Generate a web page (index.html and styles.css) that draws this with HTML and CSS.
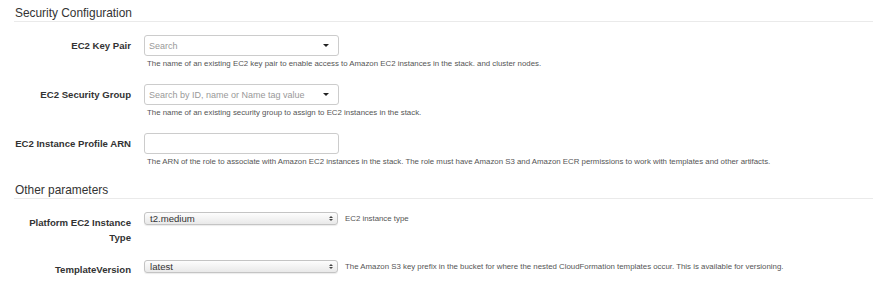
FILE: index.html
```
<!DOCTYPE html>
<html lang="en">
<head>
    <meta charset="UTF-8">
    <title>Stack parameters</title>
    <link rel="stylesheet" href="styles.css">
</head>
<body>
    <div class="section">
        <h3 class="section-title">Security Configuration</h3>

        <div class="row">
            <label class="row-label">EC2 Key Pair</label>
            <div class="field">
                <div class="picker">
                    <span class="placeholder">Search</span>
                    <span class="caret"></span>
                </div>
                <p class="help">The name of an existing EC2 key pair to enable access to Amazon EC2 instances in the stack. and cluster nodes.</p>
            </div>
        </div>

        <div class="row">
            <label class="row-label">EC2 Security Group</label>
            <div class="field">
                <div class="picker">
                    <span class="placeholder">Search by ID, name or Name tag value</span>
                    <span class="caret"></span>
                </div>
                <p class="help">The name of an existing security group to assign to EC2 instances in the stack.</p>
            </div>
        </div>

        <div class="row">
            <label class="row-label">EC2 Instance Profile ARN</label>
            <div class="field">
                <div class="text-input"></div>
                <p class="help">The ARN of the role to associate with Amazon EC2 instances in the stack. The role must have Amazon S3 and Amazon ECR permissions to work with templates and other artifacts.</p>
            </div>
        </div>
    </div>

    <div class="section">
        <h3 class="section-title">Other parameters</h3>

        <div class="row">
            <label class="row-label">Platform EC2 Instance Type</label>
            <div class="field inline">
                <div class="mac-select">
                    <span>t2.medium</span>
                    <span class="arrows"><i class="up"></i><i class="down"></i></span>
                </div>
                <p class="help">EC2 instance type</p>
            </div>
        </div>

        <div class="row">
            <label class="row-label">TemplateVersion</label>
            <div class="field inline">
                <div class="mac-select">
                    <span>latest</span>
                    <span class="arrows"><i class="up"></i><i class="down"></i></span>
                </div>
                <p class="help">The Amazon S3 key prefix in the bucket for where the nested CloudFormation templates occur. This is available for versioning.</p>
            </div>
        </div>
    </div>
</body>
</html>
```

FILE: styles.css
```
* {
    margin: 0;
    padding: 0;
    box-sizing: border-box;
}

body {
    font-family: "Liberation Sans", Arial, sans-serif;
    color: #333;
    background: #fff;
    padding: 5px 12px 0 14px;
}

/* Section headings */
.section-title {
    font-size: 11.9px;
    font-weight: normal;
    line-height: 16px;
    padding-left: 1px;
    border-bottom: 1px solid #eaeaea;
    margin-bottom: 13px;
    color: #333;
}

.section + .section {
    margin-top: 15px;
}

/* Parameter rows */
.row {
    display: grid;
    grid-template-columns: 117px 1fr;
    column-gap: 13px;
    margin-bottom: 15px;
}

.section:last-child .row:last-child {
    margin-bottom: 0;
}

.row-label {
    font-size: 9.6px;
    font-weight: bold;
    line-height: 15px;
    text-align: right;
    padding-top: 2.5px;
    margin-left: -8px;
    color: #333;
}

.field.inline {
    display: flex;
    align-items: flex-start;
    gap: 7px;
}

.help {
    font-size: 7.85px;
    line-height: 11px;
    color: #555;
    margin-top: 2px;
    padding-left: 3px;
}

.field.inline .help {
    margin-top: 1px;
    padding-left: 0;
}

/* Search pickers */
.picker,
.text-input {
    width: 195px;
    height: 21px;
    border: 1px solid #ccc;
    border-radius: 3px;
    background: #fff;
    display: flex;
    align-items: center;
    padding: 0 9px 0 4px;
}

.placeholder {
    flex: 1;
    font-size: 9px;
    color: #999;
}

.caret {
    width: 0;
    height: 0;
    border-left: 3px solid transparent;
    border-right: 3px solid transparent;
    border-top: 3.5px solid #222;
}

/* Native-looking selects */
.mac-select {
    width: 194px;
    height: 13px;
    border: 1px solid #c4c4c4;
    border-radius: 3px;
    background: linear-gradient(#fdfdfd, #e9e9e9);
    box-shadow: 0 1px 1px rgba(0, 0, 0, 0.08);
    display: flex;
    align-items: center;
    justify-content: space-between;
    padding: 0 4px 0 5px;
    font-size: 9.6px;
    line-height: 11px;
    color: #333;
    flex-shrink: 0;
}

.arrows {
    display: flex;
    flex-direction: column;
    gap: 1px;
}

.arrows i {
    display: block;
    width: 0;
    height: 0;
    border-left: 2px solid transparent;
    border-right: 2px solid transparent;
}

.arrows .up {
    border-bottom: 2.5px solid #444;
}

.arrows .down {
    border-top: 2.5px solid #444;
}
```
